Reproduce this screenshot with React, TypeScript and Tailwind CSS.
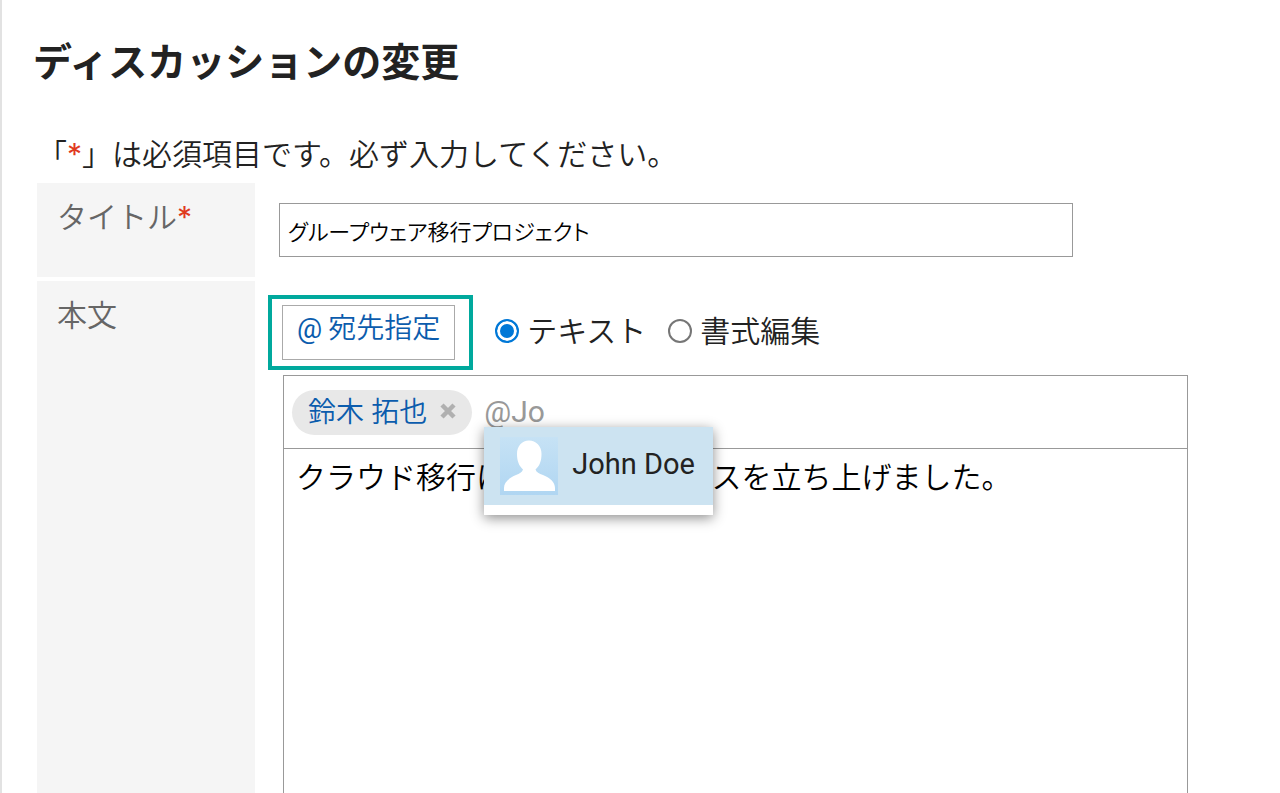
import React, { useState } from 'react';

type EditMode = 'text' | 'rich';

const AvatarIcon: React.FC = () => (
  <svg viewBox="0 0 58 58" className="h-[58px] w-[58px] shrink-0" aria-hidden="true">
    <defs>
      <linearGradient id="avatarBg" x1="0" y1="0" x2="0" y2="1">
        <stop offset="0" stopColor="#c6e2f5" />
        <stop offset="1" stopColor="#b0d6f2" />
      </linearGradient>
    </defs>
    <rect width="58" height="58" fill="url(#avatarBg)" />
    <path
      fill="#fff"
      d="M29 3.500C36 3.500 41.500 9 41.500 17C41.500 24 39.500 29 35.500 32.500C36.500 35.500 39 36.500 43 38C50.500 41 55 45.500 55 51V54H4V51C4 45.500 8.500 41 16 38C19.500 36.500 22 35.500 23 32.500C19 29 17 24 17 17C17 9 22 3.500 29 3.500Z"
    />
  </svg>
);

const CloseIcon: React.FC = () => (
  <svg viewBox="0 0 16 16" className="h-4 w-4" aria-hidden="true">
    <path d="M2 2L14 14M14 2L2 14" stroke="#b0b0b0" strokeWidth="4.500" />
  </svg>
);

const RequiredMark: React.FC = () => (
  <span className="font-['Inter',sans-serif] leading-none font-normal text-[#e03a1e]">*</span>
);

interface ModeRadioProps {
  label: string;
  checked: boolean;
  onChange: () => void;
}

const ModeRadio: React.FC<ModeRadioProps> = ({ label, checked, onChange }) => (
  <label className="flex items-center gap-2 text-[30px] leading-[44px]">
    <input
      type="radio"
      name="editMode"
      checked={checked}
      onChange={onChange}
      className="h-6 w-6 shrink-0 appearance-none rounded-full border-2 border-[#767676] bg-white checked:border-[#0078d7] checked:bg-[#0078d7] checked:shadow-[inset_0_0_0_3px_#fff]"
    />
    {label}
  </label>
);

export default function App() {
  const [title, setTitle] = useState('グループウェア移行プロジェクト');
  const [mode, setMode] = useState<EditMode>('text');
  const [recipient, setRecipient] = useState('@Jo');
  const [body, setBody] = useState('クラウド移行についてのスペースを立ち上げました。');

  return (
    <main className="flex min-h-screen flex-col border-l-2 border-[#e2e2e2] bg-white pl-[35px] font-['Noto_Sans','Noto_Sans_CJK_JP',sans-serif] font-[350] text-[#222]">
      <h1 className="-ml-1 pt-8 text-[39px] leading-[58px] font-bold">ディスカッションの変更</h1>

      <p className="pt-[42px] pb-2 text-[30px] leading-[43px]">
        「<RequiredMark />」は必須項目です。必ず入力してください。
      </p>

      <form className="flex flex-1 flex-col gap-1" onSubmit={e => e.preventDefault()}>
        {/* タイトル */}
        <div className="flex min-h-[94px]">
          <label htmlFor="title" className="w-[218px] shrink-0 bg-[#f5f5f5] px-5 pt-3 text-[30px] leading-[44px] text-[#666]">
            タイトル<RequiredMark />
          </label>
          <div className="flex-1 pt-5 pr-[207px] pl-6">
            <input
              id="title"
              type="text"
              value={title}
              onChange={e => setTitle(e.target.value)}
              className="h-[54px] w-full border border-[#999] bg-white px-2 text-[22px] text-black outline-none [font-feature-settings:'palt']"
            />
          </div>
        </div>

        {/* 本文 */}
        <div className="flex flex-1">
          <label htmlFor="body" className="w-[218px] shrink-0 bg-[#f5f5f5] px-5 pt-3 text-[30px] leading-[44px] text-[#666]">
            本文
          </label>
          <div className="flex min-w-0 flex-1 flex-col pt-[14px] pr-[92px]">
            <div className="flex items-center gap-[22px] pl-[13px]">
              <div className="border-4 border-[#00a99d] py-[6px] pr-[14px] pl-[10px]">
                <button type="button" className="flex h-[55px] items-start gap-[6px] border border-[#aaa] bg-white px-[14px] pt-[3px] font-['Roboto','Noto_Sans_CJK_JP',sans-serif] text-[28px] leading-[40px] text-[#0b5cad]">
                  <span className="font-normal">@</span>
                  <span>宛先指定</span>
                </button>
              </div>
              <div className="flex gap-[22px] pb-1">
                <ModeRadio label="テキスト" checked={mode === 'text'} onChange={() => setMode('text')} />
                <ModeRadio label="書式編集" checked={mode === 'rich'} onChange={() => setMode('rich')} />
              </div>
            </div>

            <div className="mt-[5px] ml-7 flex flex-1 flex-col border border-b-0 border-[#999]">
              <div className="flex h-[73px] items-center gap-3 border-b border-[#999] pl-2">
                <span className="flex h-[45px] items-center gap-[13px] rounded-full bg-[#e8e8e8] px-4 pb-[2px] text-[28px] leading-[44px] whitespace-nowrap text-[#0b5cad]">
                  鈴木 拓也
                  <button type="button" aria-label="鈴木 拓也を削除">
                    <CloseIcon />
                  </button>
                </span>
                <div className="relative h-[30px] flex-1">
                  <input
                    type="text"
                    aria-label="宛先"
                    value={recipient}
                    onChange={e => setRecipient(e.target.value)}
                    className="block h-[30px] w-full bg-transparent pb-[2px] font-['Roboto','Noto_Sans_CJK_JP',sans-serif] text-[30px] leading-[28px] font-normal text-[#999] outline-none"
                  />
                  <ul className="absolute top-full left-0 w-[229px] bg-white pb-[10px] shadow-[0_3px_12px_rgba(0,0,0,0.45)]">
                    <li className="flex h-[78px] items-center gap-[14px] bg-[#cce3f1] pl-4 font-['Roboto','Noto_Sans_CJK_JP',sans-serif] text-[29px] leading-[40px] font-normal whitespace-nowrap">
                      <AvatarIcon />
                      <span className="pb-1">John Doe</span>
                    </li>
                  </ul>
                </div>
              </div>
              <textarea
                id="body"
                value={body}
                onChange={e => setBody(e.target.value)}
                className="w-full flex-1 resize-none bg-transparent px-3 pt-[6px] text-[30px] leading-[44px] text-black outline-none"
              />
            </div>
          </div>
        </div>
      </form>
    </main>
  );
}
